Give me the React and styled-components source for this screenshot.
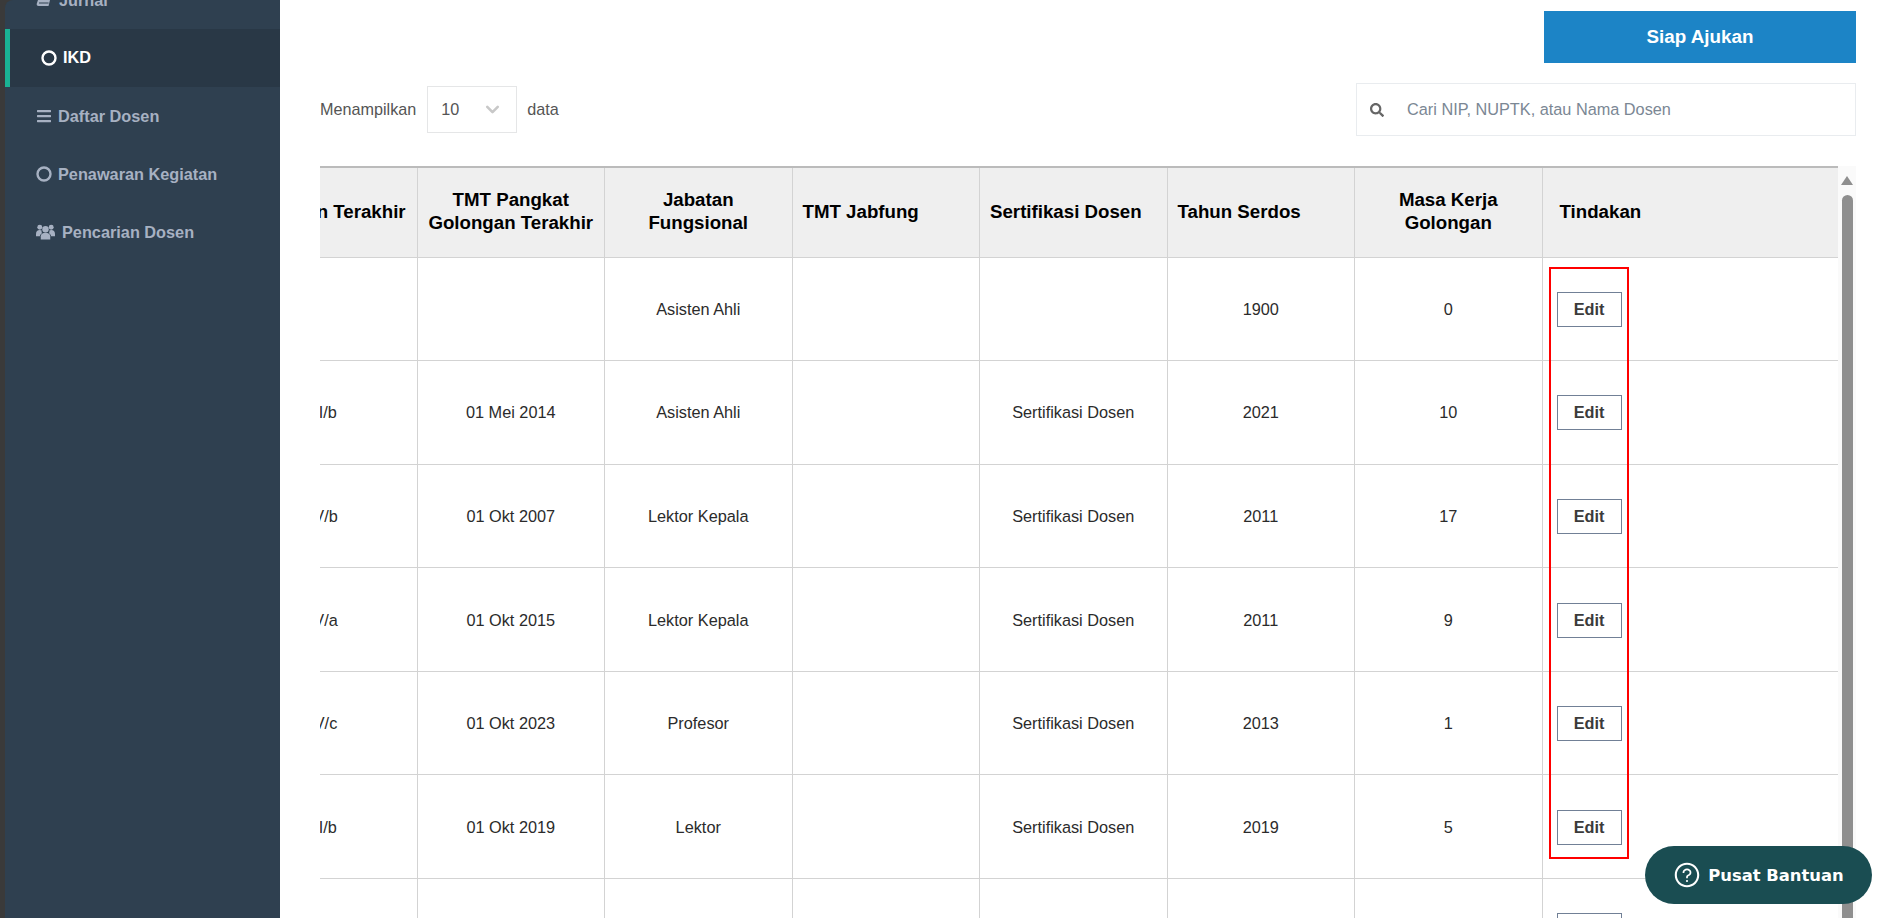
import React, { useEffect, useRef } from "react";
import styled, { createGlobalStyle } from "styled-components";
import { FaBars, FaSearch } from "react-icons/fa";
import { FiChevronDown } from "react-icons/fi";
import { AiOutlineQuestionCircle } from "react-icons/ai";

const GlobalStyle = createGlobalStyle`
  html, body { margin: 0; padding: 0; height: 100%; overflow: hidden; background: #fff; }
  body { font-family: "Liberation Sans", Arial, sans-serif; }
  #root { height: 100%; }
`;

const Page = styled.div`
  display: flex;
  height: 918px;
  overflow: hidden;
  position: relative;
  background: #fff;
`;

const SidebarShell = styled.div`
  flex: none;
  width: 280px;
  box-sizing: border-box;
  padding-left: 5px;
  background: #3a3a3a;
`;

const Sidebar = styled.nav`
  height: 100%;
  background: #2f4050;
  border-top-left-radius: 8px;
  overflow: hidden;
`;

const MenuList = styled.ul`
  list-style: none;
  margin: -29px 0 0;
  padding: 0;
`;

const MenuItem = styled.li`
  height: 58px;
  display: flex;
  align-items: center;
  gap: ${(p) => p.$gap || 6}px;
  box-sizing: border-box;
  padding-left: 31px;
  border-left: ${(p) => (p.$active ? "5px solid #1ab394" : "0")};
  background: ${(p) => (p.$active ? "#293846" : "transparent")};
  color: ${(p) => (p.$active ? "#fff" : "#a7b1c2")};
  font-size: 16.3px;
  font-weight: 700;
  svg { flex: none; }
`;

const MenuLabel = styled.span`
  position: relative;
  top: ${(p) => p.$lift || 0}px;
`;

const Main = styled.main`
  flex: 1;
  min-width: 0;
  box-sizing: border-box;
  padding: 11px 37px 0 40px;
`;

const TopBar = styled.div`
  display: flex;
  justify-content: flex-end;
`;

const SubmitButton = styled.button`
  width: 312px;
  height: 52px;
  border: 0;
  background: #1c84c6;
  color: #fff;
  font: 700 18.8px "Liberation Sans", Arial, sans-serif;
`;

const FilterBar = styled.div`
  display: flex;
  justify-content: space-between;
  align-items: center;
  margin-top: 20px;
`;

const LengthControl = styled.div`
  display: flex;
  align-items: center;
  gap: 10px;
  font-size: 16.2px;
  color: #555;
`;

const SelectBox = styled.div`
  width: 90px;
  height: 47px;
  margin-left: 1px;
  box-sizing: border-box;
  border: 1px solid #e5e6e7;
  display: flex;
  align-items: center;
  justify-content: space-between;
  padding: 0 13px;
  color: #555;
  svg { color: #c8c8c8; }
`;

const SearchBox = styled.div`
  width: 500px;
  height: 53px;
  box-sizing: border-box;
  border: 1px solid #e9ecef;
  display: flex;
  align-items: center;
  gap: 23px;
  padding-left: 13px;
  color: #7b8794;
  font-size: 16.3px;
  svg { color: #666; flex: none; }
`;

const TableArea = styled.div`
  display: flex;
  margin-top: 30px;
`;

const TableClip = styled.div`
  flex: 1;
  min-width: 0;
  overflow: hidden;
`;

const DataTable = styled.table`
  border-collapse: collapse;
  table-layout: fixed;
  width: 1610.5px;
  border-top: 2px solid #bbb;
`;

const HeadCell = styled.th`
  width: ${(p) => p.$w || 187.5}px;
  height: 90px;
  box-sizing: border-box;
  background: #efefef;
  border: 1px solid #d3d3d3;
  border-top: 0;
  color: #000;
  font-size: 18.7px;
  line-height: 23px;
  font-weight: 700;
  padding: 0 10px 2px;
  text-align: ${(p) => p.$align || "center"};
  padding-left: ${(p) => p.$pad || 10}px;
  white-space: ${(p) => (p.$nowrap ? "nowrap" : "normal")};
`;

const Cell = styled.td`
  height: 103.6px;
  box-sizing: border-box;
  border: 1px solid #d3d3d3;
  font-size: 16.3px;
  color: #2b2b2b;
  text-align: ${(p) => p.$align || "center"};
  padding: 1px 0 0 ${(p) => p.$pad || 0}px;
`;

const EditButton = styled.button`
  width: 65px;
  height: 35px;
  background: #fff;
  border: 1px solid #718096;
  color: #3b3b3b;
  font: 700 16.3px "Liberation Sans", Arial, sans-serif;
  padding: 0;
`;

const ScrollRail = styled.div`
  width: 18px;
  flex: none;
  background: #fafafa;
  display: flex;
  flex-direction: column;
  align-items: center;
  padding-top: 10px;
`;

const ScrollArrow = styled.div`
  width: 0;
  height: 0;
  border-left: 6px solid transparent;
  border-right: 6px solid transparent;
  border-bottom: 9px solid #8f8f8f;
`;

const ScrollThumb = styled.div`
  width: 11px;
  height: 900px;
  margin-top: 10px;
  border-radius: 6px 6px 0 0;
  background: #8f8f8f;
`;

const Highlight = styled.div`
  position: absolute;
  left: 1549px;
  top: 267px;
  width: 80px;
  height: 592px;
  box-sizing: border-box;
  border: 2px solid #f00;
  pointer-events: none;
`;

const HelpButton = styled.button`
  position: absolute;
  left: 1645px;
  top: 846px;
  width: 227px;
  height: 58px;
  border: 0;
  border-radius: 29px;
  background: #1a4d52;
  color: #fff;
  display: flex;
  align-items: center;
  justify-content: center;
  gap: 7px;
  font: 700 16.4px "DejaVu Sans", Verdana, sans-serif;
`;

const Ring = ({ size = 16 }) => (
  <svg width={size} height={size} viewBox="0 0 16 16">
    <circle cx="8" cy="8" r="6.5" fill="none" stroke="currentColor" strokeWidth="2.4" />
  </svg>
);

const BookIcon = () => (
  <svg width="16" height="14" viewBox="0 0 16 14">
    <path d="M4 1H15.5L12.5 13H2.5C1 13 .5 12 .8 10.5Z" fill="currentColor" />
    <path d="M3 10H12.6" stroke="#2f4050" strokeWidth="1" fill="none" />
  </svg>
);

const UsersIcon = () => (
  <svg width="19" height="16" viewBox="0 0 20 16" fill="currentColor">
    <circle cx="4" cy="3" r="2.6" />
    <circle cx="16" cy="3" r="2.6" />
    <circle cx="10" cy="5" r="3.4" />
    <path d="M5 16V12.5C5 10 7 8.7 10 8.7S15 10 15 12.5V16Z" />
    <path d="M0 10C0 7.5 1.5 6 4 6C4.8 6 5.5 6.2 6 6.5C5.7 7.5 5.9 8.500 6.400 9.200C5.100 10 4.200 11 4 12.500H0Z" />
    <path d="M20 10C20 7.500 18.500 6 16 6C15.200 6 14.500 6.200 14 6.500C14.300 7.500 14.100 8.500 13.600 9.200C14.900 10 15.800 11 16 12.500H20Z" />
  </svg>
);

const rows = [
  ["", "", "Asisten Ahli", "", "", "1900", "0"],
  ["III/b", "01 Mei 2014", "Asisten Ahli", "", "Sertifikasi Dosen", "2021", "10"],
  ["IV/b", "01 Okt 2007", "Lektor Kepala", "", "Sertifikasi Dosen", "2011", "17"],
  ["IV/a", "01 Okt 2015", "Lektor Kepala", "", "Sertifikasi Dosen", "2011", "9"],
  ["IV/c", "01 Okt 2023", "Profesor", "", "Sertifikasi Dosen", "2013", "1"],
  ["III/b", "01 Okt 2019", "Lektor", "", "Sertifikasi Dosen", "2019", "5"],
  ["", "", "", "", "", "", ""],
];

const App = () => {
  const clipRef = useRef(null);

  // the table is scrolled sideways in the reference
  useEffect(() => {
    if (clipRef.current) clipRef.current.scrollLeft = 91;
  }, []);

  return (
    <Page>
      <GlobalStyle />
      <SidebarShell>
        <Sidebar>
          <MenuList>
            <MenuItem $gap={7}><BookIcon />Jurnal</MenuItem>
            <MenuItem $active><Ring /><MenuLabel $lift={-1}>IKD</MenuLabel></MenuItem>
            <MenuItem><FaBars size={16} />Daftar Dosen</MenuItem>
            <MenuItem><Ring />Penawaran Kegiatan</MenuItem>
            <MenuItem $gap={7}><UsersIcon />Pencarian Dosen</MenuItem>
          </MenuList>
        </Sidebar>
      </SidebarShell>
      <Main>
        <TopBar>
          <SubmitButton>Siap Ajukan</SubmitButton>
        </TopBar>
        <FilterBar>
          <LengthControl>
            Menampilkan
            <SelectBox>10 <FiChevronDown size={21} strokeWidth={3} /></SelectBox>
            data
          </LengthControl>
          <SearchBox>
            <FaSearch size={14} />
            Cari NIP, NUPTK, atau Nama Dosen
          </SearchBox>
        </FilterBar>
        <TableArea>
          <TableClip ref={clipRef}>
            <DataTable>
              <thead>
                <tr>
                  <HeadCell $nowrap>Golongan Terakhir</HeadCell>
                  <HeadCell>TMT Pangkat Golongan Terakhir</HeadCell>
                  <HeadCell>Jabatan Fungsional</HeadCell>
                  <HeadCell $align="left">TMT Jabfung</HeadCell>
                  <HeadCell $align="left">Sertifikasi Dosen</HeadCell>
                  <HeadCell $align="left">Tahun Serdos</HeadCell>
                  <HeadCell>Masa Kerja Golongan</HeadCell>
                  <HeadCell $w={298} $align="left" $pad={17}>Tindakan</HeadCell>
                </tr>
              </thead>
              <tbody>
                {rows.map((row, i) => (
                  <tr key={i}>
                    {row.map((val, j) => <Cell key={j}>{val}</Cell>)}
                    <Cell $align="left" $pad={14}><EditButton>Edit</EditButton></Cell>
                  </tr>
                ))}
              </tbody>
            </DataTable>
          </TableClip>
          <ScrollRail>
            <ScrollArrow />
            <ScrollThumb />
          </ScrollRail>
        </TableArea>
      </Main>
      <Highlight />
      <HelpButton><AiOutlineQuestionCircle size={28} />Pusat Bantuan</HelpButton>
    </Page>
  );
};

export default App;
